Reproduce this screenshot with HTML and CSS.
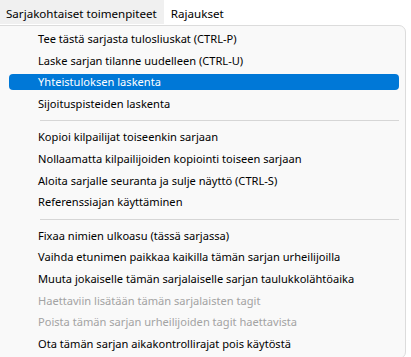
FILE: index.html
```html
<!DOCTYPE html>
<html lang="fi">
	<head>
		<meta charset="utf-8">
		<title>Sarjakohtaiset toimenpiteet</title>
		<link rel="stylesheet" href="styles.css">
	</head>
	<body>
		<nav class="menubar">
			<div class="menubar-item open">Sarjakohtaiset toimenpiteet</div>
			<div class="menubar-item">Rajaukset</div>
		</nav>
		<ul class="dropdown">
			<li class="entry">Tee tästä sarjasta tulosliuskat (CTRL-P)</li>
			<li class="entry">Laske sarjan tilanne uudelleen (CTRL-U)</li>
			<li class="entry active">Yhteistuloksen laskenta</li>
			<li class="entry">Sijoituspisteiden laskenta</li>
			<li class="separator"></li>
			<li class="entry">Kopioi kilpailijat toiseenkin sarjaan</li>
			<li class="entry">Nollaamatta kilpailijoiden kopiointi toiseen sarjaan</li>
			<li class="entry">Aloita sarjalle seuranta ja sulje näyttö (CTRL-S)</li>
			<li class="entry">Referenssiajan käyttäminen</li>
			<li class="separator"></li>
			<li class="entry">Fixaa nimien ulkoasu (tässä sarjassa)</li>
			<li class="entry">Vaihda etunimen paikkaa kaikilla tämän sarjan urheilijoilla</li>
			<li class="entry">Muuta jokaiselle tämän sarjalaiselle sarjan taulukkolähtöaika</li>
			<li class="entry disabled">Haettaviin lisätään tämän sarjalaisten tagit</li>
			<li class="entry disabled">Poista tämän sarjan urheilijoiden tagit haettavista</li>
			<li class="entry">Ota tämän sarjan aikakontrollirajat pois käytöstä</li>
		</ul>
	</body>
</html>
```

FILE: styles.css
```css
body {
	margin: 0;
	padding: 0;
	background-color: #ffffff;
	font-family: "Noto Sans", "Open Sans", sans-serif;
	font-size: 11.1px;
	color: #000000;
	overflow: hidden;
}

.menubar {
	display: flex;
	height: 24px;
	align-items: stretch;
	font-size: 11.6px;
}

.menubar-item {
	display: flex;
	align-items: center;
	padding: 2px 7px 0 7px;
	white-space: nowrap;
}

.menubar-item.open {
	flex: 0 0 157px;
	box-sizing: border-box;
	padding-left: 6px;
	background-color: #f0f0f0;
}

.dropdown {
	list-style: none;
	margin: 1px 0 0 -4px;
	padding: 2px 0 4px 0;
	width: 410px;
	box-sizing: border-box;
	background-color: #f9f9f9;
	border: 1px solid #dcdcdc;
	border-radius: 0 7px 7px 0;
}

.entry {
	height: 21.6px;
	line-height: 21.6px;
	padding-left: 41px;
	position: relative;
	z-index: 0;
	white-space: nowrap;
}

.entry.active {
	color: #ffffff;
}

.entry.active::before {
	content: "";
	position: absolute;
	left: 12px;
	right: 6px;
	top: 3px;
	bottom: 3px;
	background-color: #0078d7;
	border-radius: 4px;
	z-index: -1;
}

.entry.disabled {
	color: #a3a3a3;
}

.separator {
	height: 1px;
	margin: 6px 6px 5px 43px;
	background-color: #d6d6d6;
}
```
